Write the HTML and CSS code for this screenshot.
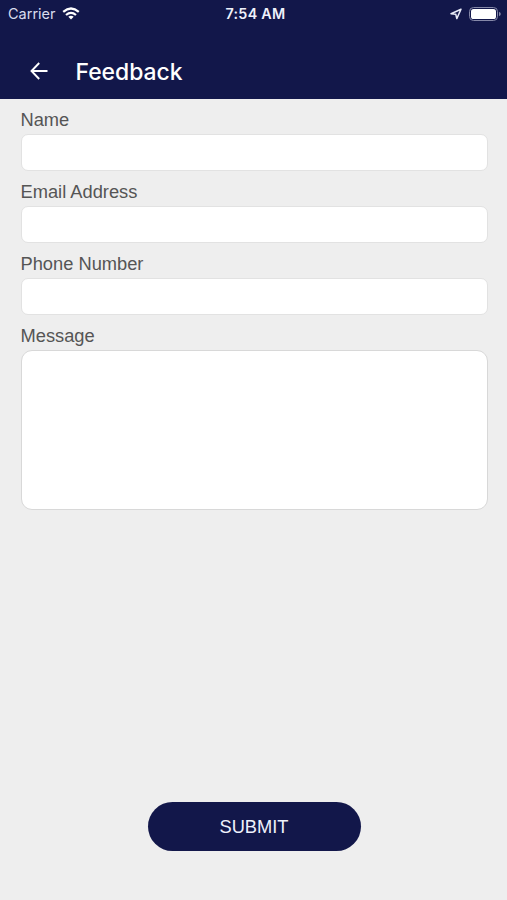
FILE: index.html
```html
<!DOCTYPE html>
<html lang="en">
<head>
<meta charset="utf-8">
<title>Feedback</title>
<link rel="stylesheet" href="styles.css">
</head>
<body>
<header class="header">
  <div class="status">
    <div class="status-left">
      <span class="carrier">Carrier</span>
      <svg class="wifi" width="18" height="13" viewBox="0 0 18 13" fill="none" stroke="#fff" stroke-width="2.2">
        <path d="M1.2 4.9Q9-1.9 16.8 4.9"/>
        <path d="M4 8Q9 3.7 14 8"/>
        <path d="M6.3 9.8Q9 7.8 11.7 9.8L9 12.6Z" fill="#fff" stroke="none"/>
      </svg>
    </div>
    <span class="time">7:54 AM</span>
    <div class="status-right">
      <svg width="12" height="12" viewBox="0 0 12 12" fill="none" stroke="#e8ebf8" stroke-width="1.5" stroke-linejoin="round">
        <path d="M11 1.3L1 5.7L5.8 6.3L6.8 10.6Z"/>
      </svg>
      <svg width="32" height="14" viewBox="0 0 32 14">
        <rect x=".5" y=".5" width="28" height="13" rx="4" fill="none" stroke="#8588a8"/>
        <rect x="2" y="2" width="25" height="10" rx="2.6" fill="#fff"/>
        <path d="M30 4.7Q31.8 5.4 31.8 7Q31.8 8.6 30 9.3Z" fill="#8588a8"/>
      </svg>
    </div>
  </div>
  <div class="navbar">
    <svg class="back" width="18" height="18" viewBox="0 0 18 18" fill="none" stroke="#fff" stroke-width="1.9">
      <path d="M17.5 9H1.8M9.2 1L1.5 9L9.2 17"/>
    </svg>
    <h1 class="title">Feedback</h1>
  </div>
</header>
<form class="form">
  <label class="label" for="name">Name</label>
  <input class="field" id="name" type="text">
  <label class="label" for="email">Email Address</label>
  <input class="field" id="email" type="email">
  <label class="label" for="phone">Phone Number</label>
  <input class="field" id="phone" type="tel">
  <label class="label" for="message">Message</label>
  <textarea class="field message" id="message"></textarea>
  <button class="submit" type="button">SUBMIT</button>
</form>
</body>
</html>
```
FILE: styles.css
```css
* {
  box-sizing: border-box;
}

body {
  margin: 0;
  height: 900px;
  display: flex;
  flex-direction: column;
  background: #eeeeee;
  font-family: "Liberation Sans", Arial, sans-serif;
  overflow: hidden;
}

.header {
  height: 98.5px;
  flex: none;
  background: #12174a;
  color: #fff;
  font-family: Inter, sans-serif;
}

.status {
  height: 27px;
  padding: 0 6px 0 8px;
  display: grid;
  grid-template-columns: 1fr auto 1fr;
  align-items: center;
  font-size: 14px;
}

.status-left {
  display: flex;
  align-items: center;
  gap: 6px;
}

.carrier {
  color: #d9dcee;
  font-size: 14.5px;
}

.time {
  margin-left: 2px;
  font-weight: 600;
  font-size: 14.3px;
  letter-spacing: 0.3px;
  color: #eef1fb;
}

.status-right {
  display: flex;
  align-items: center;
  justify-content: flex-end;
  gap: 7px;
}

.navbar {
  height: 71px;
  padding: 0 30px 0 29.5px;
  display: flex;
  align-items: center;
  margin-top: 8px;
}

.title {
  margin: 2px 0 0 28px;
  font-size: 22.9px;
  line-height: 28px;
  font-weight: 500;
}

.form {
  flex: 1;
  display: flex;
  flex-direction: column;
  padding: 9.5px 19.5px 49px 20.5px;
}

.label {
  height: 26px;
  line-height: 24px;
  font-size: 18.3px;
  color: #555;
}

.field {
  width: 100%;
  height: 37px;
  margin: 0 0 9px;
  padding: 0 10px;
  background: #fff;
  border: 1px solid #e2e2e2;
  border-radius: 7px;
  font: inherit;
  font-size: 18px;
  outline: none;
}

.message {
  height: 160px;
  padding: 10px;
  border-color: #d8d8d8;
  border-radius: 11px;
  resize: none;
}

.submit {
  width: 213px;
  height: 49px;
  margin: auto auto 0;
  padding: 1px 0 0;
  border: 0;
  border-radius: 25px;
  background: #12174a;
  color: #eef1fb;
  font: inherit;
  font-size: 18.3px;
}
```
